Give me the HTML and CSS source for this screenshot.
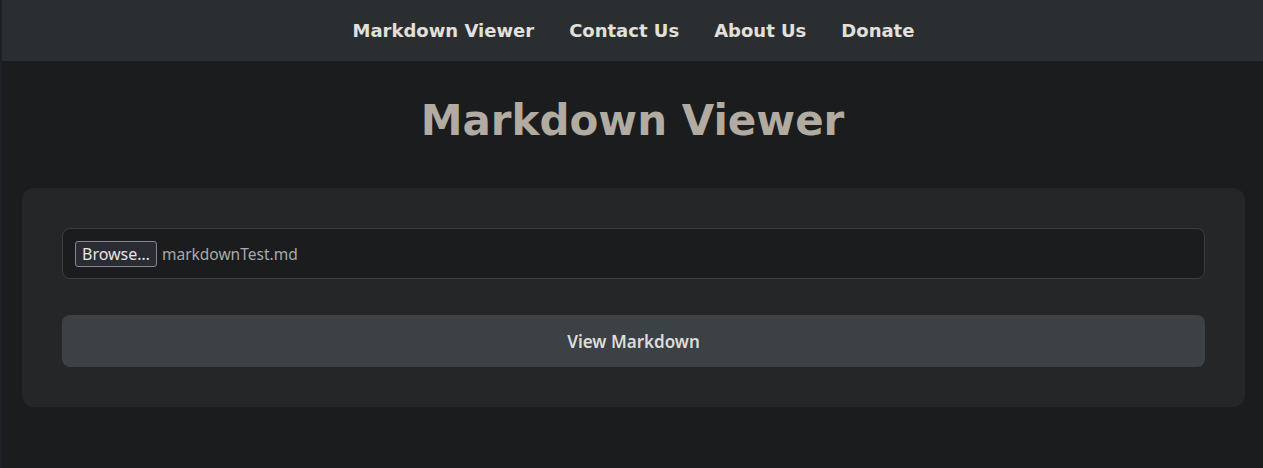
FILE: index.html
```html
<!DOCTYPE html>
<html lang="en">
<head>
    <meta charset="UTF-8">
    <meta name="viewport" content="width=device-width, initial-scale=1.0">
    <title>Markdown Viewer</title>
    <link rel="stylesheet" href="styles.css">
</head>
<body>
    <nav class="navbar">
        <a href="#">Markdown Viewer</a>
        <a href="#">Contact Us</a>
        <a href="#">About Us</a>
        <a href="#">Donate</a>
    </nav>

    <h1 class="title">Markdown Viewer</h1>

    <div class="card">
        <div class="file-input">
            <label class="browse-button" for="mdFile">Browse…</label>
            <span class="file-name">markdownTest.md</span>
            <input type="file" id="mdFile" accept=".md">
        </div>
        <button class="view-button" type="button">View Markdown</button>
    </div>
</body>
</html>
```

FILE: styles.css
```css
body {
    margin: 0;
    background-color: #1b1c1e;
    font-family: "DejaVu Sans", sans-serif;
    border-left: 2px solid #1d2025;
    min-height: 468px;
    box-sizing: border-box;
}
.navbar {
    display: flex;
    justify-content: center;
    gap: 35px;
    height: 61px;
    padding-left: 2px;
    align-items: center;
    background-color: #2b2e31;
}
.navbar a {
    color: #e2e0dc;
    text-decoration: none;
    font-weight: bold;
    font-size: 18px;
}
.title {
    margin: 35px 0 0;
    text-align: center;
    color: #b1aba1;
    font-size: 42px;
    line-height: 50px;
}
.card {
    margin: 42px 18px 0 20px;
    padding: 40px;
    background-color: #252628;
    border-radius: 12px;
    display: flex;
    flex-direction: column;
    gap: 36px;
}
.file-input {
    display: flex;
    align-items: center;
    gap: 5px;
    height: 51px;
    box-sizing: border-box;
    padding: 0 12px;
    background-color: #1b1c1e;
    border: 1px solid #3c3d40;
    border-radius: 8px;
    font-family: "Noto Sans", sans-serif;
    font-size: 15.5px;
}
.file-input input {
    display: none;
}
.browse-button {
    color: #e4e4e6;
    background-color: #2b2b33;
    border: 1px solid #86868f;
    border-radius: 3px;
    padding: 0 6px;
    font-size: 16px;
    line-height: 24px;
}
.file-name {
    color: #a9a9a9;
}
.view-button {
    height: 52px;
    background-color: #3b4144;
    color: #dedcd8;
    border: none;
    border-radius: 8px;
    font-family: "Noto Sans", sans-serif;
    font-weight: 600;
    font-size: 17px;
    cursor: pointer;
}
```
